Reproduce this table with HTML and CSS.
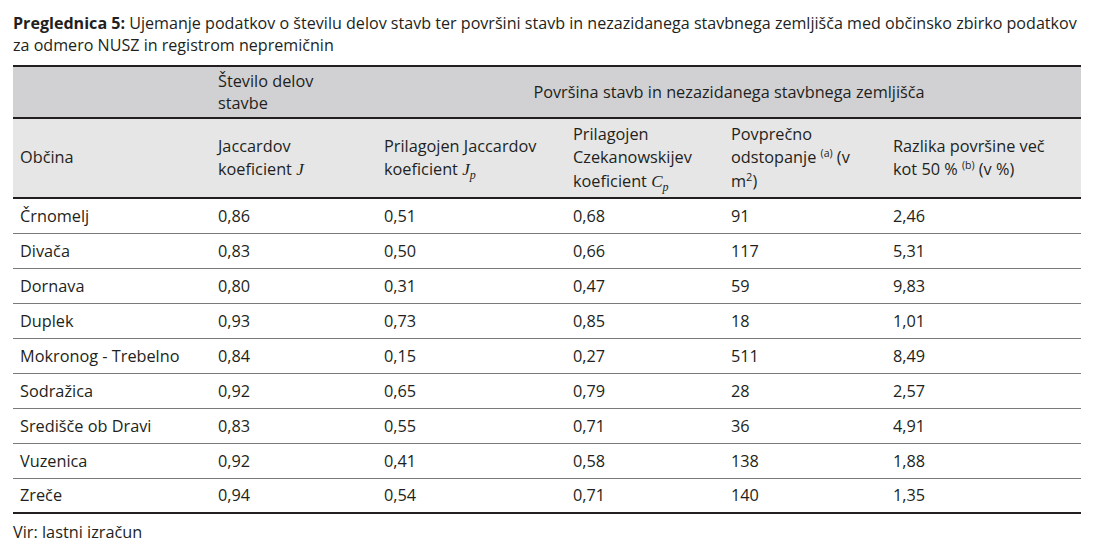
FILE: index.html
```html
<!DOCTYPE html>
<html lang="sl">
<head>
<meta charset="utf-8">
<link rel="stylesheet" href="styles.css">
</head>
<body>
<div class="page">
  <p class="caption"><b>Preglednica 5:</b> Ujemanje podatkov o številu delov stavb ter površini stavb in nezazidanega stavbnega zemljišča med občinsko zbirko podatkov<br>za odmero NUSZ in registrom nepremičnin</p>
  <table class="tbl">
    <colgroup>
      <col class="c1"><col class="c2"><col class="c3"><col class="c4"><col class="c5"><col class="c6">
    </colgroup>
    <thead>
      <tr class="h1">
        <th></th>
        <th>Število delov<br>stavbe</th>
        <th colspan="4" class="center">Površina stavb in nezazidanega stavbnega zemljišča</th>
      </tr>
      <tr class="h2">
        <th>Občina</th>
        <th>Jaccardov<br>koeficient <i class="m">J</i></th>
        <th>Prilagojen Jaccardov<br>koeficient <i class="m">J<sub>p</sub></i></th>
        <th>Prilagojen<br>Czekanowskijev<br>koeficient <i class="m">C<sub>p</sub></i></th>
        <th>Povprečno<br>odstopanje <sup>(a)</sup> (v<br>m<sup class="sq">2</sup>)</th>
        <th>Razlika površine več<br>kot 50 % <sup>(b)</sup> (v %)</th>
      </tr>
    </thead>
    <tbody>
      <tr><td>Črnomelj</td><td>0,86</td><td>0,51</td><td>0,68</td><td>91</td><td>2,46</td></tr>
      <tr><td>Divača</td><td>0,83</td><td>0,50</td><td>0,66</td><td>117</td><td>5,31</td></tr>
      <tr><td>Dornava</td><td>0,80</td><td>0,31</td><td>0,47</td><td>59</td><td>9,83</td></tr>
      <tr><td>Duplek</td><td>0,93</td><td>0,73</td><td>0,85</td><td>18</td><td>1,01</td></tr>
      <tr><td>Mokronog - Trebelno</td><td>0,84</td><td>0,15</td><td>0,27</td><td>511</td><td>8,49</td></tr>
      <tr><td>Sodražica</td><td>0,92</td><td>0,65</td><td>0,79</td><td>28</td><td>2,57</td></tr>
      <tr><td>Središče ob Dravi</td><td>0,83</td><td>0,55</td><td>0,71</td><td>36</td><td>4,91</td></tr>
      <tr><td>Vuzenica</td><td>0,92</td><td>0,41</td><td>0,58</td><td>138</td><td>1,88</td></tr>
      <tr><td>Zreče</td><td>0,94</td><td>0,54</td><td>0,71</td><td>140</td><td>1,35</td></tr>
    </tbody>
  </table>
  <p class="source">Vir: lastni izračun</p>
</div>
</body>
</html>
```
FILE: styles.css
```css
html, body {
  margin: 0;
  padding: 0;
  background: #ffffff;
}
.page {
  padding: 12px 20px 0 13px;
  font-family: "Open Sans", "Noto Sans", sans-serif;
  font-size: 16.3px;
  color: #231f20;
}
.caption {
  margin: 0;
  font-size: 16.1px;
  line-height: 22px;
  white-space: nowrap;
}
.caption b {
  font-weight: 700;
}
.tbl {
  margin-top: 9px;
  width: 1068px;
  border-collapse: collapse;
  table-layout: fixed;
}
.c1 { width: 198px; }
.c2 { width: 166px; }
.c3 { width: 189px; }
.c4 { width: 158px; }
.c5 { width: 162px; }
.c6 { width: 195px; }
.tbl th, .tbl td {
  text-align: left;
  font-weight: 400;
  padding: 0 0 0 7px;
  vertical-align: middle;
  white-space: nowrap;
  line-height: 22px;
}
.tbl th.center {
  text-align: center;
  padding: 0;
}
.h1 {
  background: #d1d1d3;
  height: 52px;
  border-top: 2px solid #231f20;
}
.h1 th {
  border-bottom: 2px solid #231f20;
}
.h2 {
  background: #e6e6e7;
  height: 80px;
}
.h2 th {
  border-bottom: 2px solid #231f20;
  line-height: 23.5px;
}
.tbl tbody tr {
  height: 35px;
}
.tbl tbody td {
  border-bottom: 1px solid #7a7a7a;
}
.tbl tbody tr:last-child td {
  border-bottom: 2px solid #231f20;
}
.m {
  font-family: "Liberation Serif", serif;
  font-style: italic;
  font-size: 17px;
}
.m sub {
  font-size: 12px;
  vertical-align: -4px;
  line-height: 0;
}
sup {
  font-size: 10.5px;
  vertical-align: 6px;
  line-height: 0;
}
sup.sq {
  font-size: 11px;
  vertical-align: 6px;
}
.source {
  margin: 7px 0 0 0;
  line-height: 22px;
}
```
